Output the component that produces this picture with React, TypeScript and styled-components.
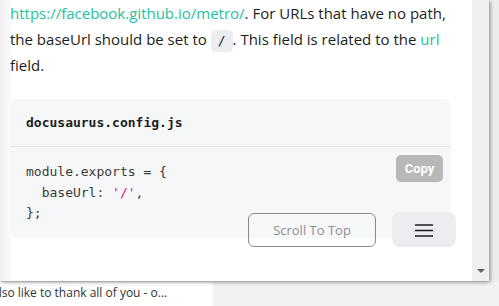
import React from "react";
import styled, { createGlobalStyle } from "styled-components";

const GlobalStyle = createGlobalStyle`
  html, body {
    margin: 0;
    padding: 0;
    width: 499px;
    height: 306px;
    overflow: hidden;
    background: #ececec;
  }
`;

const Page = styled.div`
  width: 499px;
  height: 306px;
  display: flex;
  flex-direction: column;
  position: relative;
`;

const Popup = styled.div`
  width: 489px;
  height: 281px;
  display: flex;
  position: relative;
  z-index: 1;
  box-shadow: 1px 1px 4px rgba(0, 0, 0, 0.45);
`;

const Content = styled.div`
  flex: 1;
  position: relative;
  overflow: hidden;
  padding: 0 0 0 10px;
  background: linear-gradient(to right, #efefef 0, #fff 14px);
  font-family: "Open Sans", "Noto Sans", sans-serif;
  font-size: 15px;
  line-height: 26px;
  color: #1c1e21;
`;

const Paragraph = styled.p`
  margin: 0;
  width: 450px;
`;

const Link = styled.a`
  color: #25c2a0;
  text-decoration: none;
`;

const InlineCode = styled.code`
  display: inline-block;
  background: #ebedf0;
  border-radius: 5px;
  padding: 0 7px;
  line-height: 22px;
  font-family: "DejaVu Sans Mono", monospace;
  font-size: 13px;
`;

const CodeBlock = styled.div`
  position: relative;
  margin-top: 21px;
  width: 441px;
  background: #f6f7f8;
  border-radius: 7px;
  font-family: "DejaVu Sans Mono", "Liberation Mono", monospace;
  font-size: 13px;
`;

const CodeTitle = styled.div`
  height: 47px;
  display: flex;
  align-items: center;
  padding: 0 16px;
  font-weight: bold;
  color: #1c1e21;
  border-bottom: 1px solid #e4e6ea;
`;

const CodeBody = styled.pre`
  margin: 0;
  padding: 15px 16px 14px;
  line-height: 20.5px;
  color: #393a34;
  font-family: inherit;
`;

const Str = styled.span`
  color: #e3116c;
`;

const CopyButton = styled.button`
  position: absolute;
  top: 56px;
  right: 8px;
  width: 47px;
  height: 27px;
  border: none;
  border-radius: 5px;
  background: #b8b8b8;
  color: #fff;
  font-family: Roboto, "Liberation Sans", sans-serif;
  font-weight: bold;
  font-size: 13px;
  padding: 0;
`;

const ScrollTopButton = styled.button`
  position: absolute;
  left: 248px;
  top: 213px;
  width: 128px;
  height: 34px;
  background: transparent;
  border: 1px solid #8a8a8a;
  border-radius: 6px;
  color: #8f8f8f;
  font-family: "Open Sans", "Noto Sans", sans-serif;
  font-size: 13px;
  padding: 0;
`;

const MenuButton = styled.button`
  position: absolute;
  left: 392px;
  top: 212px;
  width: 64px;
  height: 35px;
  background: #ebedf0;
  border: none;
  border-radius: 8px;
  display: flex;
  align-items: center;
  justify-content: center;
  padding: 0;
`;

const Scrollbar = styled.div`
  width: 17px;
  background: #f0f0f0;
  display: flex;
  flex-direction: column;
  justify-content: flex-end;
  align-items: center;
  padding-bottom: 8px;
`;

const Arrow = styled.div`
  width: 0;
  height: 0;
  border-left: 4px solid transparent;
  border-right: 4px solid transparent;
  border-top: 4px solid #606060;
`;

const BottomStrip = styled.div`
  flex: 1;
  display: flex;
  margin-top: 1px;
`;

const ListPanel = styled.div`
  width: 213px;
  background: #fff;
  overflow: hidden;
  white-space: nowrap;
  font-family: "Open Sans", "Noto Sans", sans-serif;
  font-size: 12px;
  color: #333;
  padding-top: 2px;
  text-indent: -8px;
`;

const SidePanel = styled.div`
  flex: 1;
  background: #f3f2f1;
`;

export default function App() {
  return (
    <Page>
      <GlobalStyle />
      <Popup>
        <Content>
          <Paragraph>
            <Link href="#">https://facebook.github.io/metro/</Link>. For URLs
            that have no path, the baseUrl should be set to{" "}
            <InlineCode>/</InlineCode>. This field is related to the{" "}
            <Link href="#">url</Link> field.
          </Paragraph>
          <CodeBlock>
            <CodeTitle>docusaurus.config.js</CodeTitle>
            <CodeBody>
              {"module.exports = {\n  baseUrl: "}
              <Str>'/'</Str>
              {",\n};"}
            </CodeBody>
            <CopyButton>Copy</CopyButton>
          </CodeBlock>
          <ScrollTopButton>Scroll To Top</ScrollTopButton>
          <MenuButton>
            <svg width="20" height="16" viewBox="0 0 20 16">
              <path
                d="M1 3h18M1 8.5h18M1 14h18"
                stroke="#1c1e21"
                strokeWidth="1.5"
              />
            </svg>
          </MenuButton>
        </Content>
        <Scrollbar>
          <Arrow />
        </Scrollbar>
      </Popup>
      <BottomStrip>
        <ListPanel>also like to thank all of you - o...</ListPanel>
        <SidePanel />
      </BottomStrip>
    </Page>
  );
}
